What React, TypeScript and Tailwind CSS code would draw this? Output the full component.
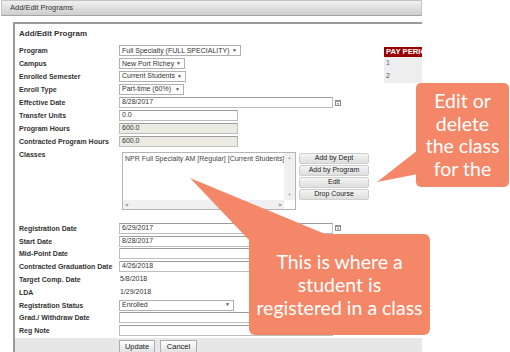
import React from "react";

const Cal = () => (
  <svg width="6" height="6" viewBox="0 0 6 6" className="shrink-0">
    <rect x="0.5" y="0.5" width="5" height="5" fill="#fff" stroke="#8a8a8a" />
    <rect x="0.5" y="0.5" width="5" height="1.5" fill="#9a9a9a" />
    <rect x="2" y="3" width="2" height="1.5" fill="#9a9a9a" />
  </svg>
);

const Field = ({
  w,
  value = "",
  gray = false,
  cal = false,
}: {
  w: string;
  value?: string;
  gray?: boolean;
  cal?: boolean;
}) => (
  <div className="flex items-center gap-[2px]">
    <div
      className={`${w} h-[11px] border border-[#bdbdbd] border-t-[#9c9c9c] px-[2px] flex items-center text-[7px] text-[#333] ${
        gray ? "bg-[#ebebe4]" : "bg-white"
      }`}
    >
      {value}
    </div>
    {cal && <Cal />}
  </div>
);

const Select = ({ w, value }: { w: string; value: string }) => (
  <div
    className={`${w} h-[11px] border border-[#b0b0b0] bg-white px-[2px] flex items-center justify-between text-[7px] text-[#333]`}
  >
    <span className="whitespace-nowrap">{value}</span>
    <span className="text-[5px] text-[#555] pr-[1px]">▼</span>
  </div>
);

const Row = ({
  label,
  h,
  children,
}: {
  label: string;
  h: string;
  children?: React.ReactNode;
}) => (
  <div className={`flex items-center ${h}`}>
    <div className="w-[100px] shrink-0 text-[7px] font-bold text-[#333] whitespace-nowrap leading-none">
      {label}
    </div>
    {children}
  </div>
);

const SideBtn = ({ children }: { children: React.ReactNode }) => (
  <div className="h-[11px] w-[70px] rounded-[2px] border border-[#cfcfcf] bg-linear-to-b from-[#f4f4f4] to-[#dedede] flex items-center justify-center text-[7px] text-[#222]">
    {children}
  </div>
);

const App = () => {
  return (
    <div className="relative w-[510px] h-[352px] overflow-hidden bg-white font-['Liberation_Sans',Arial,sans-serif]">
      <div className="w-[422px] h-[352px] overflow-hidden">
        {/* page header */}
        <div className="h-[16px] ml-[1px] border border-[#c4c4c4] border-b-[#a4a4a4] bg-linear-to-b from-[#f1f1f1] to-[#cdcdcd] flex items-center pl-[8px] text-[7.5px] text-[#333]">
          Add/Edit Programs
        </div>

        {/* panel */}
        <div className="mt-[6px] ml-[13px] h-[330px] border-t-2 border-l-2 border-[#9a9a9a] flex">
          <div className="w-[369px] shrink-0 pl-[4px] flex flex-col">
            <div className="h-[20.5px] flex items-center text-[8px] font-bold text-[#333]">
              Add/Edit Program
            </div>
            <Row label="Program" h="h-[12.9px]">
              <Select w="w-[122px]" value="Full Specialty (FULL SPECIALITY)" />
            </Row>
            <Row label="Campus" h="h-[12.9px]">
              <Select w="w-[66px]" value="New Port Richey" />
            </Row>
            <Row label="Enrolled Semester" h="h-[12.9px]">
              <Select w="w-[67px]" value="Current Students" />
            </Row>
            <Row label="Enroll Type" h="h-[12.9px]">
              <Select w="w-[65px]" value="Part-time (60%)" />
            </Row>
            <Row label="Effective Date" h="h-[12.9px]">
              <Field w="w-[214px]" value="8/28/2017" cal />
            </Row>
            <Row label="Transfer Units" h="h-[12.9px]">
              <Field w="w-[119px]" value="0.0" />
            </Row>
            <Row label="Program Hours" h="h-[12.9px]">
              <Field w="w-[119px]" value="600.0" gray />
            </Row>
            <Row label="Contracted Program Hours" h="h-[12.9px]">
              <Field w="w-[119px]" value="600.0" gray />
            </Row>

            {/* classes */}
            <div className="flex h-[74.3px]">
              <div className="w-[100px] shrink-0 h-[12.9px] flex items-center text-[7px] font-bold text-[#333] leading-none">
                Classes
              </div>
              <div className="flex gap-[3px] pt-[4.5px] pl-[3px]">
                <div className="w-[174px] h-[58px] border border-[#b5b5b5] bg-white flex flex-col">
                  <div className="flex flex-1">
                    <div className="flex-1 px-[2px] pt-[1px] text-[7px] text-[#444] whitespace-nowrap overflow-hidden">
                      NPR Full Specialty AM [Regular] [Current Students]
                    </div>
                    <div className="w-[11px] bg-[#f0f0f0] flex flex-col justify-between items-center text-[4px] text-[#a0a0a0] py-[2px]">
                      <span>▲</span>
                      <span>▼</span>
                    </div>
                  </div>
                  <div className="flex h-[9px]">
                    <div className="flex-1 bg-[#f0f0f0] flex justify-between items-center text-[4px] text-[#a0a0a0] px-[2px]">
                      <span>◀</span>
                      <span>▶</span>
                    </div>
                    <div className="w-[11px] bg-white" />
                  </div>
                </div>
                <div className="flex flex-col gap-[1px] pt-[0.5px]">
                  <SideBtn>Add by Dept</SideBtn>
                  <SideBtn>Add by Program</SideBtn>
                  <SideBtn>Edit</SideBtn>
                  <SideBtn>Drop Course</SideBtn>
                </div>
              </div>
            </div>

            <Row label="Registration Date" h="h-[12.8px]">
              <Field w="w-[214px]" value="6/29/2017" cal />
            </Row>
            <Row label="Start Date" h="h-[12.8px]">
              <Field w="w-[214px]" value="8/28/2017" cal />
            </Row>
            <Row label="Mid-Point Date" h="h-[12.8px]">
              <Field w="w-[214px]" cal />
            </Row>
            <Row label="Contracted Graduation Date" h="h-[12.8px]">
              <Field w="w-[214px]" value="4/26/2018" cal />
            </Row>
            <Row label="Target Comp. Date" h="h-[12.8px]">
              <span className="text-[7px] text-[#333] pl-[1px]">5/8/2018</span>
            </Row>
            <Row label="LDA" h="h-[12.8px]">
              <span className="text-[7px] text-[#333] pl-[1px]">1/29/2018</span>
            </Row>
            <Row label="Registration Status" h="h-[12.8px]">
              <Select w="w-[115px]" value="Enrolled" />
            </Row>
            <Row label="Grad./ Withdraw Date" h="h-[12.8px]">
              <Field w="w-[214px]" cal />
            </Row>
            <Row label="Reg Note" h="h-[12.8px]">
              <Field w="w-[214px]" />
            </Row>
          </div>

          {/* pay period table */}
          <div className="mt-[23px] w-[70px] shrink-0 self-start bg-[#eeeeee]">
            <div className="h-[10px] bg-[#990000] px-[2px] flex items-center text-[7.7px] font-bold text-white whitespace-nowrap">
              PAY PERIOD
            </div>
            <div className="h-[13px] px-[2px] flex items-center text-[7px] text-[#3d6ea8]">1</div>
            <div className="h-[13px] px-[2px] flex items-center text-[7px] text-[#555]">2</div>
          </div>
        </div>
      </div>

      {/* footer buttons */}
      <div className="absolute left-[15px] top-[338px] w-[407px] h-[14px] bg-[#e7e7e7] pl-[104px] pt-[2px] flex gap-[5px]">
        <div className="w-[36px] h-[13px] border border-[#adadad] bg-linear-to-b from-white to-[#e2e2e2] flex items-center justify-center text-[7.5px] text-[#222]">
          Update
        </div>
        <div className="w-[37px] h-[13px] border border-[#adadad] bg-linear-to-b from-white to-[#e2e2e2] flex items-center justify-center text-[7.5px] text-[#222]">
          Cancel
        </div>
      </div>

      {/* callout pointers */}
      <svg
        className="absolute left-0 top-0 pointer-events-none"
        width="510"
        height="352"
        viewBox="0 0 510 352"
      >
        <polygon points="377,182 418,150 418,174" fill="#f48768" />
        <polygon points="190,178 330,236 250,241" fill="#f48768" />
      </svg>

      {/* callouts */}
      <div className="absolute left-[416px] top-[83px] w-[93px] h-[104px] rounded-[5px] bg-[#f48768] flex items-center justify-center text-center text-[19.5px] leading-[22.5px] text-white font-['Lato',sans-serif]">
        <div>
          Edit or
          <br />
          delete
          <br />
          the class
          <br />
          for the
        </div>
      </div>
      <div className="absolute left-[249px] top-[234px] w-[181px] h-[101px] rounded-[6px] bg-[#f48768] flex items-center justify-center text-center text-[19.5px] leading-[23px] text-white font-['Lato',sans-serif]">
        <div>
          This is where a
          <br />
          student is
          <br />
          registered in a class
        </div>
      </div>
    </div>
  );
};

export default App;
